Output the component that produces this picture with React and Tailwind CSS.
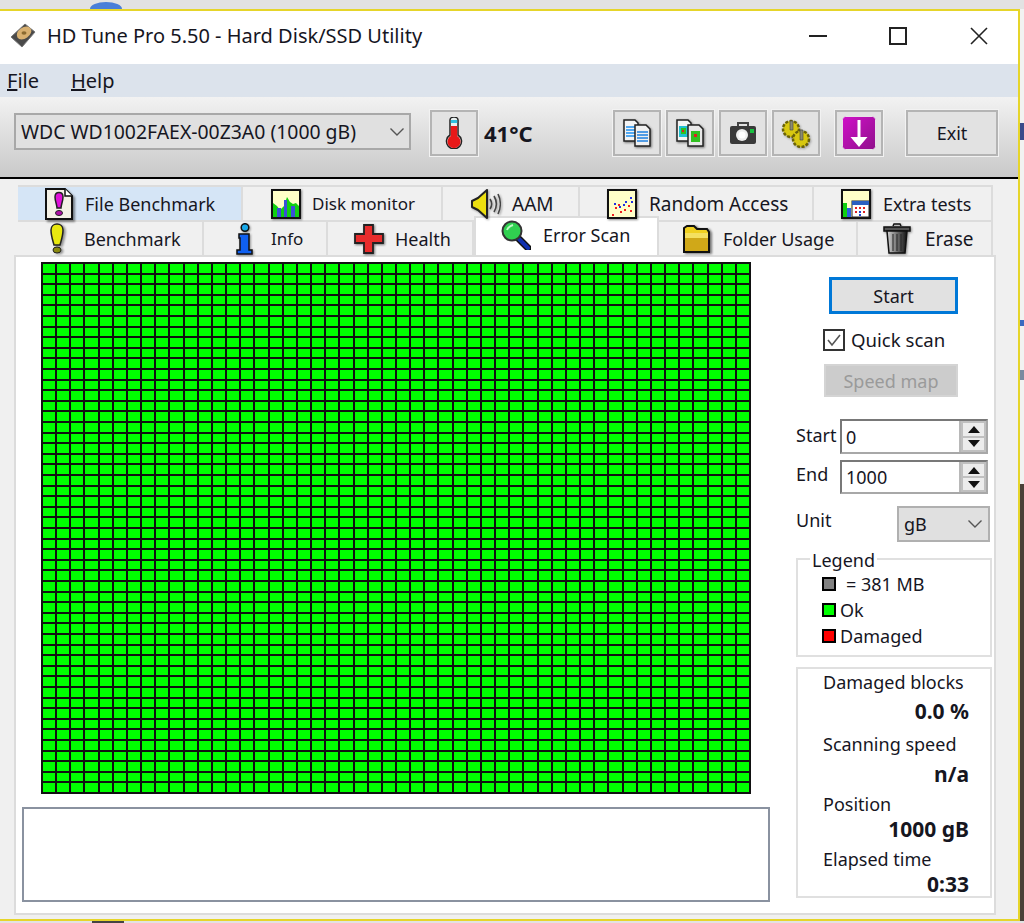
const topTabs = [
  { label: "File Benchmark", icon: FileBenchIcon, box: "w-[225px] pl-[26px] gap-[11px] bg-[#d5e5f6] text-[18px]" },
  { label: "Disk monitor", icon: MonitorIcon, box: "w-[200px] pl-[28px] gap-[11px] text-[17px]" },
  { label: "AAM", icon: SpeakerIcon, box: "w-[137px] pl-[28px] gap-[11px] text-[19px]" },
  { label: "Random Access", icon: RandomIcon, box: "w-[234px] pl-[27px] gap-[12px] text-[19px]" },
  { label: "Extra tests", icon: ExtraIcon, box: "w-[179px] pl-[27px] gap-[12px] text-[18px]" },
];

const bottomTabs = [
  { label: "Benchmark", icon: BulbIcon, box: "w-[186px] pl-[24px] gap-[12px] text-[18px]" },
  { label: "Info", icon: InfoIcon, box: "w-[124px] pl-[25px] gap-[12px] text-[17px]" },
  { label: "Health", icon: CrossIcon, box: "w-[146px] pl-[26px] gap-[11px] text-[18px]" },
  { label: "Error Scan", icon: LensIcon, box: "w-[185px] pl-[25px] gap-[12px] text-[18px]", active: true },
  { label: "Folder Usage", icon: FolderIcon, box: "w-[199px] pl-[23px] gap-[11px] text-[18px]" },
  { label: "Erase", icon: TrashIcon, box: "w-[135px] pl-[24px] gap-[13px] text-[19px]" },
];

const stats = [
  { label: "Damaged blocks", value: "0.0 %", labelGap: "mt-[1px]", valueGap: "mt-[5px]" },
  { label: "Scanning speed", value: "n/a", labelGap: "mt-[9px]", valueGap: "mt-[6px]" },
  { label: "Position", value: "1000 gB", labelGap: "mt-[6px]", valueGap: "mt-[1px]" },
  { label: "Elapsed time", value: "0:33", labelGap: "mt-[6px]", valueGap: "mt-[1px]" },
];

const cells = Array.from({ length: 2500 }, (_, i) => i);

function FileBenchIcon() {
  return (
    <svg viewBox="0 0 30 32" className="h-[32px] w-[30px] drop-shadow-[2px_2px_1px_rgba(0,0,0,0.45)]">
      <path d="M2 1h19l7 7v23H2z" fill="#f4f1e6" stroke="#111" strokeWidth="2" />
      <path d="M21 1v7h7" fill="#fff" stroke="#111" strokeWidth="1.5" />
      <path d="M11 9c0-6 8-6 8 0 0 4-2 8-2 11h-4c0-3-2-7-2-11z" fill="#e010d8" stroke="#222" strokeWidth="1.5" />
      <ellipse cx="15" cy="25" rx="3.5" ry="2.5" fill="#b010a8" stroke="#222" />
    </svg>
  );
}

function MonitorIcon() {
  return (
    <svg viewBox="0 0 30 30" className="h-[30px] w-[30px] drop-shadow-[1px_1px_1px_rgba(0,0,0,0.45)]">
      <rect x="1" y="1" width="28" height="28" fill="#ffffc8" stroke="#111" strokeWidth="2" />
      <path d="M2 28V14l4 3 3 4 4-4 3-9 3 5 3 2 3-1 3 3v11z" fill="#10d010" />
      <path d="M6 28v-9h4v9zM13 28V11h3v17zM20 28v-11h4v11z" fill="#3a50d8" />
    </svg>
  );
}

function SpeakerIcon() {
  return (
    <svg viewBox="0 0 30 30" className="h-[30px] w-[30px] drop-shadow-[1px_1px_1px_rgba(0,0,0,0.4)]">
      <path d="M1 12l6-3 9-8v28l-9-8-6-3z" fill="#ecdf10" stroke="#222" strokeWidth="2" strokeLinejoin="round" />
      <path d="M19 10c2 3 2 7 0 10M23 7c3 5 3 11 0 16M27 5c3 6 3 14 0 20" fill="none" stroke="#444" strokeWidth="1.6" />
    </svg>
  );
}

function RandomIcon() {
  const red = [[5, 25], [8, 18], [13, 22], [17, 20], [21, 16], [23, 21], [11, 15]];
  const blue = [[7, 14], [12, 17], [18, 12], [23, 8], [16, 15], [24, 12]];
  return (
    <svg viewBox="0 0 30 30" className="h-[30px] w-[30px] drop-shadow-[1px_1px_1px_rgba(0,0,0,0.45)]">
      <rect x="1" y="1" width="28" height="28" fill="#ffffc8" stroke="#111" strokeWidth="2" />
      {red.map(([x, y]) => (
        <rect key={`${x}-${y}`} x={x} y={y} width="2" height="2" fill="#f02020" />
      ))}
      {blue.map(([x, y]) => (
        <rect key={`${x}-${y}`} x={x} y={y} width="2" height="2" fill="#2030e0" />
      ))}
    </svg>
  );
}

function ExtraIcon() {
  return (
    <svg viewBox="0 0 30 30" className="h-[30px] w-[30px] drop-shadow-[1px_1px_1px_rgba(0,0,0,0.45)]">
      <rect x="1" y="1" width="28" height="28" fill="#ffffc8" stroke="#111" strokeWidth="2" />
      <path d="M2 28V14h4v14z" fill="#10d010" />
      <path d="M6 28v-9h4v9z" fill="#2a60e0" />
      <rect x="11" y="12" width="17" height="16" fill="#fff" stroke="#222" />
      <rect x="11" y="12" width="17" height="4" fill="#2a60c0" />
      <path d="M14 18h2v2h-2zM18 18h2v2h-2zM22 18h2v2h-2zM14 22h2v2h-2zM22 22h2v2h-2z" fill="#e02020" />
      <path d="M18 22h2v2h-2zM18 25h2v2h-2z" fill="#2040d0" />
    </svg>
  );
}

function BulbIcon() {
  return (
    <svg viewBox="0 0 30 32" className="h-[32px] w-[30px] drop-shadow-[2px_1px_1px_rgba(0,0,0,0.4)]">
      <path d="M9 7c0-8 12-8 12 0 0 6-2 11-3 15h-6c-1-4-3-9-3-15z" fill="#e8e810" stroke="#222" strokeWidth="1.5" />
      <ellipse cx="15" cy="27" rx="4" ry="3" fill="#8a8a10" stroke="#222" />
    </svg>
  );
}

function InfoIcon() {
  return (
    <svg viewBox="0 0 30 32" className="h-[32px] w-[30px] drop-shadow-[1px_1px_1px_rgba(0,0,0,0.4)]">
      <circle cx="16" cy="4.5" r="3.8" fill="#18a8e8" stroke="#111" strokeWidth="1.5" />
      <path d="M10 11h10v16h3v4H8v-4h3V15h-1z" fill="#1060f0" stroke="#111" strokeWidth="1.5" />
    </svg>
  );
}

function CrossIcon() {
  return (
    <svg viewBox="0 0 30 30" className="h-[30px] w-[30px] drop-shadow-[1px_1px_1px_rgba(0,0,0,0.5)]">
      <path d="M10 1h9v9h10v9H19v10h-9V19H1v-9h9z" fill="#e82c2c" stroke="#222" strokeWidth="1.8" />
    </svg>
  );
}

function LensIcon() {
  return (
    <svg viewBox="0 0 30 30" className="h-[30px] w-[30px]">
      <path d="M18 19l9 9" stroke="#111" strokeWidth="7" strokeLinecap="round" />
      <path d="M18 19l9 9" stroke="#1030b0" strokeWidth="4" strokeLinecap="round" />
      <circle cx="11" cy="11" r="9.5" fill="#30d050" stroke="#333" strokeWidth="2" />
      <path d="M6 10c1-3 3-4 6-5" fill="none" stroke="#c0f8c8" strokeWidth="2" />
    </svg>
  );
}

function FolderIcon() {
  return (
    <svg viewBox="0 0 30 30" className="h-[30px] w-[30px] drop-shadow-[2px_1px_1px_rgba(0,0,0,0.5)]">
      <path d="M2 4l3-2h7l3 3h10l2 3v20H2z" fill="#f0d020" stroke="#111" strokeWidth="2" />
      <path d="M3 9h23v18H3z" fill="#d0a818" />
      <path d="M3 9h23v5H3z" fill="#f4e060" />
    </svg>
  );
}

function TrashIcon() {
  return (
    <svg viewBox="0 0 30 32" className="h-[32px] w-[30px] drop-shadow-[1px_1px_1px_rgba(0,0,0,0.4)]">
      <defs>
        <linearGradient id="can" x1="0" x2="1">
          <stop offset="0" stopColor="#d8d8d8" />
          <stop offset="0.5" stopColor="#707070" />
          <stop offset="1" stopColor="#111" />
        </linearGradient>
      </defs>
      <path d="M11 3l1-2h6l1 2" fill="none" stroke="#111" strokeWidth="1.5" />
      <path d="M2 4h26v4H2z" fill="#555" stroke="#111" strokeWidth="1.5" />
      <path d="M5 8h20l-2 22H7z" fill="url(#can)" stroke="#111" strokeWidth="1.5" />
      <path d="M11 11v17M15 11v17M19 11v17" stroke="#222" strokeWidth="1" />
    </svg>
  );
}

function DiskIcon() {
  return (
    <svg viewBox="0 0 26 26" className="h-[26px] w-[26px]">
      <path d="M1 14L15 1l10 8-13 15z" fill="#4a4a4a" stroke="#777" />
      <ellipse cx="14" cy="10" rx="8" ry="5.5" fill="#d8b070" transform="rotate(-35 14 10)" />
      <ellipse cx="14" cy="10" rx="2.5" ry="1.8" fill="#8a6a30" />
    </svg>
  );
}

function ThermometerIcon() {
  return (
    <svg viewBox="0 0 18 32" className="h-[32px] w-[18px]">
      <path d="M5 3a4 3 0 0 1 8 0v15a7.5 7.5 0 1 1-8 0z" fill="#e8f0f0" stroke="#222" strokeWidth="1.5" />
      <path d="M5.8 3h6.4v3H5.8z" fill="#30c0e0" />
      <path d="M5.8 9h6.4v10a6.5 6.5 0 1 1-6.4 0z" fill="#e81818" />
    </svg>
  );
}

function CopyTextIcon() {
  return (
    <svg viewBox="0 0 28 28" className="h-[28px] w-[28px] drop-shadow-[1px_1px_1px_rgba(0,0,0,0.5)]">
      <path d="M1 1h11l3 3v18H1z" fill="#f4f4f4" stroke="#222" strokeWidth="1.5" />
      <path d="M3 8h9M3 11h9M3 14h9M3 17h9" stroke="#1e90f0" strokeWidth="1.5" />
      <path d="M12 6h11l4 4v17H12z" fill="#f0f0f0" stroke="#222" strokeWidth="1.5" />
      <path d="M14 13h11M14 16h11M14 19h11M14 22h11" stroke="#1e80e0" strokeWidth="1.5" />
    </svg>
  );
}

function CopyImageIcon() {
  return (
    <svg viewBox="0 0 28 28" className="h-[28px] w-[28px] drop-shadow-[1px_1px_1px_rgba(0,0,0,0.5)]">
      <path d="M1 1h11l3 3v18H1z" fill="#f4f4f4" stroke="#222" strokeWidth="1.5" />
      <rect x="3" y="7" width="9" height="11" fill="#20c0d0" />
      <rect x="5" y="9" width="5" height="6" fill="#30c020" />
      <rect x="6" y="11" width="2" height="2" fill="#e02020" />
      <path d="M12 6h11l4 4v17H12z" fill="#e8e8e8" stroke="#222" strokeWidth="1.5" />
      <rect x="15" y="12" width="9" height="11" fill="#30c020" />
      <rect x="18" y="15" width="3" height="3" fill="#e02020" />
    </svg>
  );
}

function CameraIcon() {
  return (
    <svg viewBox="0 0 28 24" className="h-[24px] w-[28px]">
      <path d="M9 5V2h10v3" fill="none" stroke="#444" strokeWidth="2" />
      <rect x="1" y="5" width="26" height="18" rx="2" fill="#3a3a3a" />
      <circle cx="13" cy="14" r="6" fill="#eee" />
      <circle cx="13" cy="14" r="3.5" fill="#fff" />
      <rect x="21" y="8" width="4" height="4" fill="#18c040" />
    </svg>
  );
}

function GearsIcon() {
  return (
    <svg viewBox="0 0 30 30" className="h-[30px] w-[30px] drop-shadow-[1px_1px_1px_rgba(0,0,0,0.3)]">
      <circle cx="10" cy="11" r="8" fill="#d8c810" stroke="#6a6208" strokeWidth="2.5" strokeDasharray="3 1.5" />
      <circle cx="20" cy="21" r="8" fill="#d8c810" stroke="#6a6208" strokeWidth="2.5" strokeDasharray="3 1.5" />
      <path d="M9 3h3v9H9zM19 12h3v10h-3z" fill="#8a8a70" stroke="#444" strokeWidth="0.6" />
    </svg>
  );
}

function SaveIcon() {
  return (
    <svg viewBox="0 0 34 34" className="h-[34px] w-[34px]">
      <defs>
        <linearGradient id="save" x1="0" y1="0" x2="1" y2="1">
          <stop offset="0" stopColor="#d010c8" />
          <stop offset="1" stopColor="#90108c" />
        </linearGradient>
      </defs>
      <rect x="0.5" y="0.5" width="33" height="33" rx="3" fill="url(#save)" stroke="#e8e0e8" />
      <path d="M15.5 4h3v17h7L17 31 8.5 21h7z" fill="#fff" />
    </svg>
  );
}

function Chevron() {
  return (
    <svg viewBox="0 0 16 10" className="h-[10px] w-[16px]">
      <path d="M1.5 1.5L8 8l6.5-6.5" fill="none" stroke="#555" strokeWidth="1.4" />
    </svg>
  );
}

function Spinner() {
  return (
    <div className="flex w-[27px] flex-col self-stretch border-l-2 border-[#b8b8b8]">
      <div className="flex flex-1 items-center justify-center border-2 border-[#c0c0c0] bg-[#ececec]">
        <svg viewBox="0 0 12 7" className="h-[7px] w-[12px]">
          <path d="M6 0l6 7H0z" fill="#111" />
        </svg>
      </div>
      <div className="flex flex-1 items-center justify-center border-2 border-t-0 border-[#c0c0c0] bg-[#ececec]">
        <svg viewBox="0 0 12 7" className="h-[7px] w-[12px]">
          <path d="M6 7l6-7H0z" fill="#111" />
        </svg>
      </div>
    </div>
  );
}

function ToolButton({ className = "w-[48px]", children }) {
  return (
    <button
      type="button"
      className={`mt-[13px] flex h-[46px] items-center justify-center border-2 border-[#b4b4b4] bg-[#e2e2e2] outline outline-1 outline-[#f2f2f2] ${className}`}
    >
      {children}
    </button>
  );
}

function NumberField({ value }) {
  return (
    <div className="flex h-full w-[148px] items-center border-2 border-[#a8a8a8] border-t-[#787878] border-l-[#787878] bg-white pl-[4px]">
      <span className="flex-1">{value}</span>
      <Spinner />
    </div>
  );
}

function TabRow({ tabs, className }) {
  return (
    <div className={`ml-[18px] flex items-end ${className}`}>
      {tabs.map((tab) => {
        const Icon = tab.icon;
        return (
          <div
            key={tab.label}
            className={`flex items-center ${tab.box} ${
              tab.active
                ? "h-[39px] border-2 border-b-0 border-[#dcdcdc] bg-white pb-[4px]"
                : "h-[35px] border-t-2 border-r-2 border-[#dcdcdc]"
            }`}
          >
            <Icon />
            <span>{tab.label}</span>
          </div>
        );
      })}
    </div>
  );
}

export default function App() {
  return (
    <div className="flex h-[923px] w-[1024px] flex-col overflow-hidden bg-[#e2e2e2] text-[18px] leading-[24px] text-[#16161f] [font-family:'Noto_Sans',sans-serif]">
      <div className="h-[9px] shrink-0 pt-[2px] pl-[90px]">
        <div className="h-[7px] w-[32px] rounded-[50%_50%_0_0/100%_100%_0_0] bg-[#4a7fd8]" />
      </div>

      <div className="flex flex-1">
        <div className="flex w-[1020px] flex-col border-t-2 border-r-2 border-b-2 border-[#e6d52a] bg-[#f0f0f0]">
          <div className="flex h-[53px] shrink-0 items-center bg-white pb-[4px] pl-[10px]">
            <DiskIcon />
            <span className="ml-[11px] text-[20px]">HD Tune Pro 5.50 - Hard Disk/SSD Utility</span>
            <div className="ml-auto flex items-center pr-[30px]">
              <div className="h-[2px] w-[18px] bg-[#222]" />
              <div className="ml-[62px] h-[18px] w-[18px] border-2 border-[#222]" />
              <svg viewBox="0 0 18 18" className="ml-[63px] h-[18px] w-[18px]">
                <path d="M1 1l16 16M17 1L1 17" stroke="#222" strokeWidth="1.6" />
              </svg>
            </div>
          </div>

          <div className="flex h-[33px] shrink-0 items-center gap-[32px] bg-[#dce3ec] pl-[7px] text-[20px]">
            <span><span className="underline">F</span>ile</span>
            <span><span className="underline">H</span>elp</span>
          </div>

          <div className="flex h-[82px] shrink-0 items-start border-b-2 border-black bg-gradient-to-b from-[#f2f2f2] to-[#c9c9c9] pl-[14px]">
            <div className="mt-[16px] flex h-[37px] w-[397px] items-center justify-between border-2 border-[#a8a8a8] bg-[#e0e0e0] pr-[4px] pl-[5px] text-[19.4px]">
              <span>WDC WD1002FAEX-00Z3A0 (1000 gB)</span>
              <Chevron />
            </div>
            <ToolButton className="ml-[19px] w-[48px]">
              <ThermometerIcon />
            </ToolButton>
            <span className="mt-[24px] ml-[6px] w-[129px] text-[22px] font-bold">41°C</span>
            <ToolButton>
              <CopyTextIcon />
            </ToolButton>
            <ToolButton className="ml-[5px] w-[48px]">
              <CopyImageIcon />
            </ToolButton>
            <ToolButton className="ml-[5px] w-[48px]">
              <CameraIcon />
            </ToolButton>
            <ToolButton className="ml-[5px] w-[48px]">
              <GearsIcon />
            </ToolButton>
            <ToolButton className="ml-[15px] w-[48px]">
              <SaveIcon />
            </ToolButton>
            <ToolButton className="ml-[23px] w-[92px]">Exit</ToolButton>
          </div>

          <div className="flex flex-1 flex-col pt-[6px]">
            <TabRow tabs={topTabs} className="h-[35px]" />
            <TabRow tabs={bottomTabs} className="-mt-[3px] h-[38px]" />

            <div className="ml-[14px] flex h-[660px] w-[982px] border-2 border-[#dcdcdc] bg-white">
              <div className="w-[780px] shrink-0 pt-[5px]">
                <div className="ml-[25px] grid h-[532px] w-[710px] grid-cols-[repeat(50,1fr)] grid-rows-[repeat(50,1fr)] gap-[2px] bg-[#111111] p-[2px]">
                  {cells.map((cell) => (
                    <div key={cell} className="bg-[#00ff00]" />
                  ))}
                </div>
                <div className="mt-[13px] ml-[6px] h-[95px] w-[748px] border-2 border-[#8a92a0] bg-white" />
              </div>

              <div className="flex w-[196px] flex-col pt-[20px]">
                <button
                  type="button"
                  className="ml-[33px] h-[37px] w-[129px] border-[3px] border-[#0078d7] bg-[#e1e1e1]"
                >
                  Start
                </button>
                <div className="mt-[15px] ml-[27px] flex h-[22px] items-center gap-[6px] text-[18.6px]">
                  <div className="flex h-[22px] w-[22px] items-center justify-center border-2 border-[#333] bg-white">
                    <svg viewBox="0 0 16 16" className="h-[16px] w-[16px]">
                      <path d="M2 8l4 5 8-10" fill="none" stroke="#555" strokeWidth="1.6" />
                    </svg>
                  </div>
                  <span>Quick scan</span>
                </div>
                <button
                  type="button"
                  disabled
                  className="mt-[13px] ml-[28px] h-[33px] w-[134px] border-2 border-[#d4d4d4] bg-[#cccccc] text-[#9a9a9a]"
                >
                  Speed map
                </button>

                <div className="mt-[22px] flex h-[35px] items-center">
                  <span className="w-[44px] pb-[3px]">Start</span>
                  <NumberField value="0" />
                </div>
                <div className="mt-[6px] flex h-[34px] items-center">
                  <span className="w-[44px] pb-[6px]">End</span>
                  <NumberField value="1000" />
                </div>
                <div className="mt-[12px] flex h-[36px] w-[194px] items-start">
                  <span className="mt-[2px]">Unit</span>
                  <div className="ml-auto flex h-full w-[93px] items-center justify-between border-2 border-[#b0b0b0] bg-[#e0e0e0] pr-[5px] pl-[5px]">
                    <span>gB</span>
                    <Chevron />
                  </div>
                </div>

                <div className="relative mt-[16px] h-[99px] w-[196px] border-2 border-[#e0e0e0] pt-[11px] pl-[24px]">
                  <span className="absolute -top-[12px] left-[12px] bg-white px-[2px]">Legend</span>
                  <div className="flex h-[26px] items-center">
                    <div className="h-[14px] w-[14px] border-2 border-black bg-[#808080]" />
                    <span className="ml-[10px]">= 381 MB</span>
                  </div>
                  <div className="flex h-[26px] items-center">
                    <div className="h-[14px] w-[14px] border-2 border-black bg-[#00ff00]" />
                    <span className="ml-[4px]">Ok</span>
                  </div>
                  <div className="flex h-[26px] items-center">
                    <div className="h-[14px] w-[14px] border-2 border-black bg-[#ff0000]" />
                    <span className="ml-[4px]">Damaged</span>
                  </div>
                </div>

                <div className="mt-[10px] flex h-[231px] w-[196px] flex-col border-2 border-[#e0e0e0] pr-[21px] pl-[25px]">
                  {stats.map((stat) => (
                    <div key={stat.label} className="flex flex-col">
                      <span className={stat.labelGap}>{stat.label}</span>
                      <span className={`text-right text-[21px] font-bold ${stat.valueGap}`}>{stat.value}</span>
                    </div>
                  ))}
                </div>
              </div>
            </div>
          </div>
        </div>

        <div className="flex flex-1 flex-col bg-[#f2f2f2]">
          <div className="mt-[114px] h-[17px] bg-[#3a4a8a]" />
          <div className="mt-[180px] h-[6px] bg-[#3a6ac0]" />
          <div className="mt-[44px] h-[10px] bg-[#7a8aa0]" />
          <div className="mt-[104px] flex-1 bg-[#4a4038]" />
        </div>
      </div>

      <div className="h-[2px] shrink-0 pl-[92px]">
        <div className="h-[2px] w-[32px] bg-[#444]" />
      </div>
    </div>
  );
}
